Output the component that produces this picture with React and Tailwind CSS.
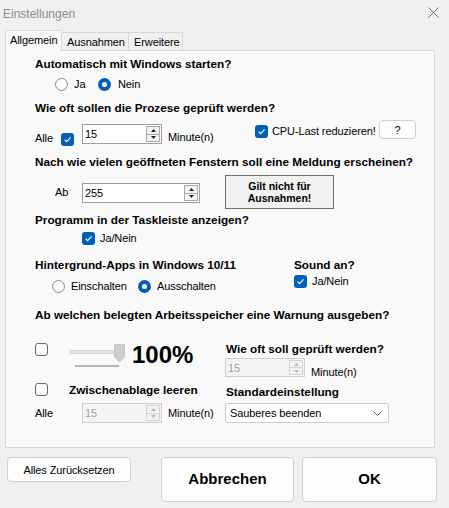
import React from "react";

const R = "text-[11px] tracking-[-0.1px] leading-[14px]";
const B = "text-[11.75px] font-bold leading-[16px] h-[16px]";

function Check({ checked }) {
  if (checked)
    return (
      <span className="w-[13px] h-[13px] rounded-[3px] bg-[#005fb8] flex items-center justify-center shrink-0">
        <svg width="9" height="9" viewBox="0 0 9 9">
          <path d="M1.6 4.6 L3.6 6.6 L7.6 2.4" stroke="white" strokeWidth="1.1" fill="none" />
        </svg>
      </span>
    );
  return <span className="w-[13px] h-[13px] rounded-[3px] border border-[#6a6a6a] bg-[#fbfbfb] shrink-0 block" />;
}

function Radio({ on }) {
  if (on)
    return (
      <span className="w-[13px] h-[13px] rounded-full bg-[#005fb8] flex items-center justify-center shrink-0">
        <span className="w-[5px] h-[5px] rounded-full bg-white" />
      </span>
    );
  return <span className="w-[13px] h-[13px] rounded-full border border-[#8a8a8a] bg-[#fafafa] shrink-0 block" />;
}

function Spin({ disabled }) {
  const c = disabled ? "#b8b8b8" : "#222";
  const bc = disabled ? "border-[#d6d6d6]" : "border-[#a8a8a8]";
  return (
    <div className="w-[15px] h-full flex flex-col py-[1px] pr-[1px] shrink-0">
      <div className={"flex-1 border " + bc + " bg-[#f2f2f2] flex items-center justify-center"}>
        <svg width="5" height="3" viewBox="0 0 5 3"><path d="M0 3 L2.5 0 L5 3 Z" fill={c} /></svg>
      </div>
      <div className={"flex-1 border border-t-0 " + bc + " bg-[#f2f2f2] flex items-center justify-center"}>
        <svg width="5" height="3" viewBox="0 0 5 3"><path d="M0 0 L2.5 3 L5 0 Z" fill={c} /></svg>
      </div>
    </div>
  );
}

function NumInput({ value, w, h = "h-[20px]", disabled, extra = "" }) {
  return (
    <div
      className={
        w + " " + h + " " + extra + " flex items-stretch border shrink-0 " +
        (disabled ? "border-[#cfcfcf] bg-[#f4f4f4] text-[#a3a3a3]" : "border-[#9d9d9d] bg-white text-black")
      }
    >
      <span className={"flex-1 pl-[2px] pt-[2px] " + R}>{value}</span>
      <Spin disabled={disabled} />
    </div>
  );
}

export default function App() {
  return (
    <div className="w-[449px] h-[508px] bg-[#f0f0f0] font-['Liberation_Sans',Arial,sans-serif] text-black overflow-hidden flex flex-col">
      {/* title bar */}
      <div className="h-[30px] flex items-start justify-between shrink-0">
        <span className="ml-[3px] mt-[7px] text-[12px] leading-[14px] text-[#8c8c8c]">Einstellungen</span>
        <svg className="mt-[7px] mr-[10px]" width="11" height="11" viewBox="0 0 11 11">
          <path d="M0.5 0.5 L10.5 10.5 M10.5 0.5 L0.5 10.5" stroke="#707070" strokeWidth="1" />
        </svg>
      </div>

      {/* tabs */}
      <div className="h-[20px] ml-[5px] flex items-end shrink-0">
        <div className={"relative z-10 mb-[-1px] h-[21px] w-[57px] bg-[#f9f9f9] border-l border-t border-r border-[#d9d9d9] pl-[4px] pt-[2px] " + R}>
          Allgemein
        </div>
        <div className={"h-[18px] w-[67px] bg-[#f0f0f0] border-t border-r border-[#d9d9d9] pl-[5px] pt-[2px] " + R}>
          Ausnahmen
        </div>
        <div className={"h-[18px] w-[54px] bg-[#f0f0f0] border-t border-r border-[#d9d9d9] pl-[5px] pt-[2px] " + R}>
          Erweitere
        </div>
      </div>

      {/* panel */}
      <div className="ml-[5px] w-[430px] h-[398px] shrink-0 border border-[#d9d9d9] bg-[#f9f9f9] pl-[29px] flex flex-col">
        <div className={"mt-[5px] " + B}>Automatisch mit Windows starten?</div>
        <div className="mt-[4px] h-[16px] flex items-center ml-[20px]">
          <div className="w-[43px] flex items-center gap-[6px]">
            <Radio />
            <span className={R}>Ja</span>
          </div>
          <div className="flex items-center gap-[7px]">
            <Radio on />
            <span className={R}>Nein</span>
          </div>
        </div>

        <div className={"mt-[8px] " + B}>Wie oft sollen die Prozese geprüft werden?</div>
        <div className="mt-[4px] h-[25px] flex items-start">
          <span className={"w-[26px] mt-[11px] " + R}>Alle</span>
          <span className="mt-[13px]"><Check checked /></span>
          <NumInput value="15" w="w-[80px]" extra="ml-[8px] mt-[4px]" />
          <span className={"w-[93px] pl-[6px] mt-[10px] " + R}>Minute(n)</span>
          <span className="mt-[5px]"><Check checked /></span>
          <span className={"w-[111px] pl-[4px] mt-[4px] " + R}>CPU-Last reduzieren!</span>
          <div className={"w-[37px] h-[19px] bg-[#fdfdfd] border border-[#d0d0d0] rounded-[4px] flex items-center justify-center " + R}>
            ?
          </div>
        </div>

        <div className={"mt-[9px] " + B}>Nach wie vielen geöffneten Fenstern soll eine Meldung erscheinen?</div>
        <div className="mt-[5px] h-[34px] flex items-start">
          <span className={"ml-[20px] w-[27px] mt-[10px] " + R}>Ab</span>
          <NumInput value="255" w="w-[118px]" extra="mt-[8px]" />
          <div className="ml-[25px] w-[109px] h-[34px] border border-[#6e6e6e] bg-[#f1f1f1] flex flex-col items-center justify-center text-[10.5px] font-bold leading-[12px]">
            <span>Gilt nicht für</span>
            <span>Ausnahmen!</span>
          </div>
        </div>

        <div className={"mt-[3px] " + B}>Programm in der Taskleiste anzeigen?</div>
        <div className="mt-[2px] h-[16px] flex items-center ml-[47px] gap-[5px]">
          <Check checked />
          <span className={R}>Ja/Nein</span>
        </div>

        <div className="mt-[11px] flex">
          <div className="w-[259px] flex flex-col">
            <div className={B}>Hintergrund-Apps in Windows 10/11</div>
            <div className="mt-[5px] h-[16px] flex items-center ml-[17px]">
              <div className="w-[86px] flex items-center gap-[6px]">
                <Radio />
                <span className={R}>Einschalten</span>
              </div>
              <div className="flex items-center gap-[6px]">
                <Radio on />
                <span className={R}>Ausschalten</span>
              </div>
            </div>
          </div>
          <div className="flex flex-col">
            <div className={B}>Sound an?</div>
            <div className="h-[16px] flex items-center gap-[5px]">
              <Check checked />
              <span className={R}>Ja/Nein</span>
            </div>
          </div>
        </div>

        <div className={"mt-[13px] " + B}>Ab welchen belegten Arbeitsspeicher eine Warnung ausgeben?</div>

        <div className="flex">
          <div className="w-[190px] flex flex-col">
            <div className="mt-[19px] h-[26px] flex items-start">
              <span className="mt-[1px]"><Check /></span>
              <svg className="ml-[22px] mt-[2px]" width="56" height="24" viewBox="0 0 56 24">
                <rect x="0.5" y="6.5" width="45" height="3" fill="#e4e4e4" stroke="#d2d2d2" />
                <path d="M44.5 0.5 H54.5 V13 L49.5 18 L44.5 13 Z" fill="#cdcdcd" stroke="#c4c4c4" />
                <rect x="5" y="21" width="44" height="2" fill="#b5b5b5" />
              </svg>
              <span className="ml-[6px] text-[24px] font-bold leading-[26px]">100%</span>
            </div>
            <div className="mt-[15px] h-[13px] flex items-center">
              <Check />
              <span className="ml-[21px] text-[11.75px] font-bold leading-[14px]">Zwischenablage leeren</span>
            </div>
            <div className="mt-[7px] h-[20px] flex items-center">
              <span className={"w-[47px] " + R}>Alle</span>
              <NumInput value="15" w="w-[80px]" disabled />
              <span className={"ml-[6px] " + R}>Minute(n)</span>
            </div>
          </div>

          <div className="flex flex-col">
            <div className={"mt-[18px] pl-[1px] " + B}>Wie oft soll geprüft werden?</div>
            <div className="mt-[1px] h-[19px] flex items-start">
              <NumInput value="15" w="w-[80px]" h="h-[19px]" disabled />
              <span className={"ml-[6px] mt-[7px] " + R}>Minute(n)</span>
            </div>
            <div className={"mt-[7px] pl-[1px] " + B}>Standardeinstellung</div>
            <div className="mt-[3px] w-[164px] h-[20px] bg-white border border-[#cfcfcf] rounded-[2px] flex items-center justify-between pl-[4px] pr-[6px]">
              <span className={R}>Sauberes beenden</span>
              <svg width="9" height="5" viewBox="0 0 9 5">
                <path d="M0.5 0.5 L4.5 4.5 L8.5 0.5" stroke="#606060" strokeWidth="1" fill="none" />
              </svg>
            </div>
          </div>
        </div>
      </div>

      {/* bottom buttons */}
      <div className="mt-[9px] pl-[7px] flex items-start">
        <div className={"w-[124px] h-[25px] bg-[#fdfdfd] border border-[#d0d0d0] rounded-[4px] flex items-center justify-center " + R}>
          Alles Zurücksetzen
        </div>
        <div className="ml-[30px] w-[133px] h-[45px] bg-[#fdfdfd] border border-[#d0d0d0] rounded-[4px] flex items-center justify-center text-[15px] font-bold">
          Abbrechen
        </div>
        <div className="ml-[8px] w-[135px] h-[45px] bg-[#fdfdfd] border border-[#d0d0d0] rounded-[4px] flex items-center justify-center text-[15px] font-bold">
          OK
        </div>
      </div>
    </div>
  );
}
